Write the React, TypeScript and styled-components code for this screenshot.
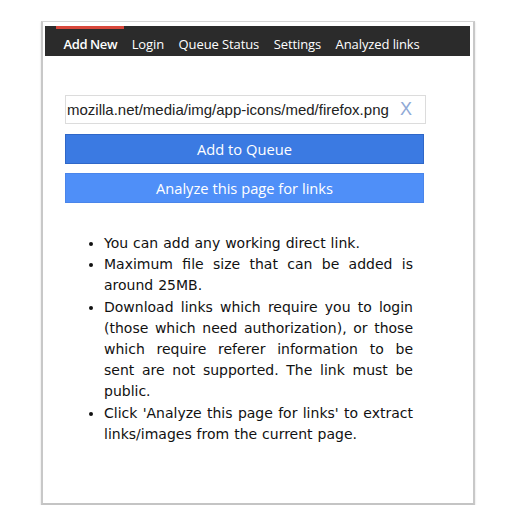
import React from "react";
import styled, { createGlobalStyle } from "styled-components";

const Global = createGlobalStyle`
  html, body { margin: 0; padding: 0; background: #ffffff; }
  body { font-family: "Open Sans", "DejaVu Sans", sans-serif; }
`;

const Page = styled.div`
  padding: 21px 0 0 41px;
`;

const Panel = styled.div`
  box-sizing: border-box;
  width: 434px;
  height: 484px;
  border: 1px solid #d4d4d4;
  border-left: 2px solid #c8c8c8;
  border-right: 2px solid #c8c8c8;
  border-bottom: 2px solid #c4c4c4;
  box-shadow: 0 1px 2px rgba(0, 0, 0, 0.15);
  background: #fff;
  padding: 4px 3px 0 2px;
`;

const NavBar = styled.nav`
  display: flex;
  height: 30px;
  background: #2b2b2b;
  padding-left: 11px;
`;

const Tab = styled.a<{ $active?: boolean }>`
  display: flex;
  align-items: center;
  padding: 3px 7px 0 7.5px;
  border-top: 3px solid ${(p) => (p.$active ? "#d8473b" : "transparent")};
  color: #ffffff;
  font-size: 13px;
  font-weight: ${(p) => (p.$active ? 600 : 400)};
  letter-spacing: ${(p) => (p.$active ? "-0.4px" : "-0.1px")};
  white-space: nowrap;
  cursor: pointer;
`;

const Content = styled.div`
  padding: 39px 0 0 20px;
  width: 361px;
`;

const InputBox = styled.div`
  box-sizing: border-box;
  display: flex;
  align-items: center;
  height: 29px;
  border: 1px solid #dcdcdc;
  padding: 0 13px 0 1px;
`;

const UrlText = styled.span`
  font-family: "Liberation Sans", Arial, sans-serif;
  font-size: 15px;
  color: #222;
  white-space: nowrap;
`;

const Clear = styled.span`
  font-family: "Liberation Sans", Arial, sans-serif;
  font-size: 18px;
  color: #8fa9d6;
  margin-left: auto;
`;

const Button = styled.button<{ $tone: "dark" | "light" }>`
  display: block;
  box-sizing: border-box;
  width: 359px;
  height: 30px;
  margin-top: ${(p) => (p.$tone === "dark" ? "10px" : "9px")};
  border: 1px solid ${(p) => (p.$tone === "dark" ? "#2f67c8" : "#4a85ea")};
  background: ${(p) => (p.$tone === "dark" ? "#3b7ae2" : "#4f8ff8")};
  color: #fff;
  font-family: "Open Sans", "DejaVu Sans", sans-serif;
  font-size: 14.7px;
  padding: 0;
`;

const Notes = styled.ul`
  margin: 30px 0 0;
  padding: 0 13px 0 39px;
  color: #111;
  font-family: "DejaVu Sans", sans-serif;
  font-size: 14px;
  word-spacing: 0.5px;
  line-height: 21.2px;
  text-align: justify;
`;

const Note = styled.li``;

const tabs = ["Add New", "Login", "Queue Status", "Settings", "Analyzed links"];

export default function App() {
  return (
    <Page>
      <Global />
      <Panel>
        <NavBar>
          {tabs.map((t, i) => (
            <Tab key={t} $active={i === 0}>
              {t}
            </Tab>
          ))}
        </NavBar>
        <Content>
          <InputBox>
            <UrlText>mozilla.net/media/img/app-icons/med/firefox.png</UrlText>
            <Clear>X</Clear>
          </InputBox>
          <Button $tone="dark">Add to Queue</Button>
          <Button $tone="light">Analyze this page for links</Button>
          <Notes>
            <Note>You can add any working direct link.</Note>
            <Note>Maximum file size that can be added is around 25MB.</Note>
            <Note>
              Download links which require you to login (those which need
              authorization), or those which require referer information to be
              sent are not supported. The link must be public.
            </Note>
            <Note>
              Click 'Analyze this page for links' to extract links/images from
              the current page.
            </Note>
          </Notes>
        </Content>
      </Panel>
    </Page>
  );
}
